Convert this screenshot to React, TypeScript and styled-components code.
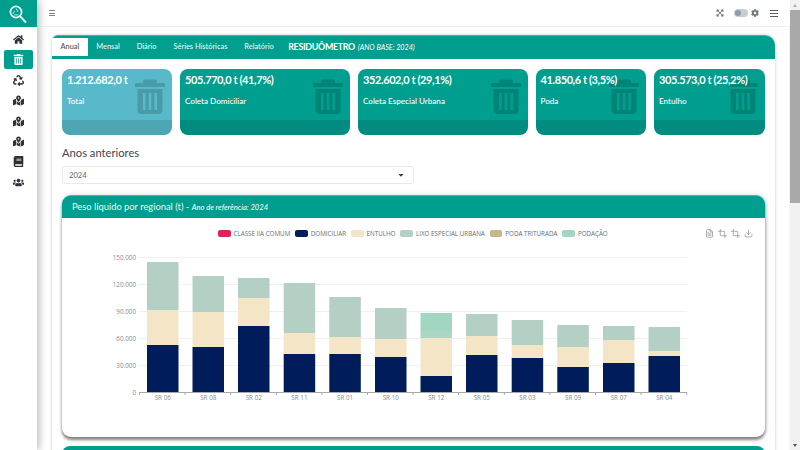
import React from "react";
import styled, { createGlobalStyle } from "styled-components";
import { FaHome, FaRecycle, FaBook, FaUsers, FaMapMarkedAlt, FaTrashAlt, FaExpandArrowsAlt, FaCog, FaCaretDown } from "react-icons/fa";
import { FiDownload, FiFileText, FiCrop } from "react-icons/fi";

const Global = createGlobalStyle`
  html, body { margin: 0; padding: 0; background: #fff; overflow: hidden; }
  body { font-family: Lato, "Open Sans", sans-serif; }
  * { box-sizing: border-box; }
`;

const Shell = styled.div`
  display: flex;
  width: 800px;
  height: 450px;
  overflow: hidden;
`;
const Sidebar = styled.aside`
  width: 37px;
  flex: none;
  background: #fff;
  box-shadow: 2px 0 8px rgba(0,0,0,.28);
  z-index: 2;
`;
const Logo = styled.div`
  height: 27px;
  background: #009e8e;
  display: flex;
  align-items: center;
  justify-content: center;
  padding-right: 1px;
`;
const NavList = styled.nav`
  display: flex;
  flex-direction: column;
  align-items: center;
  padding-top: 3px;
`;
const NavItem = styled.div<{ $active?: boolean }>`
  width: 29px;
  height: 19px;
  margin: 0 0 1.4px;
  border-radius: 2px;
  display: flex;
  align-items: center;
  justify-content: center;
  font-size: 11px;
  color: ${p => (p.$active ? "#fff" : "#2d3338")};
  background: ${p => (p.$active ? "#009e8e" : "transparent")};
`;
const Main = styled.main`
  flex: 1;
  min-width: 0;
  display: flex;
  flex-direction: column;
`;
const Header = styled.header`
  height: 27px;
  flex: none;
  display: flex;
  align-items: center;
  padding: 0 12px 0 12px;
  border-bottom: 1px solid #f1f2f3;
  color: #6c757d;
`;
const Spacer = styled.div`flex: 1;`;
const HeaderIcon = styled.span`
  display: flex;
  font-size: 8px;
  color: #6c757d;
`;
const Burger = styled.span<{ $bold?: boolean; $gap?: number }>`
  width: ${p => (p.$bold ? 8 : 6)}px;
  height: ${p => (p.$bold ? 7 : 6)}px;
  margin-left: ${p => p.$gap ?? 0}px;
  border-top: 1px solid ${p => (p.$bold ? "#555c62" : "#7d858b")};
  border-bottom: 1px solid ${p => (p.$bold ? "#555c62" : "#7d858b")};
  position: relative;
  &::after {
    content: "";
    position: absolute;
    left: 0; right: 0;
    top: calc(50% - .5px);
    height: 1px;
    background: ${p => (p.$bold ? "#555c62" : "#7d858b")};
  }
`;
const Toggle = styled.span`
  width: 14px;
  height: 8px;
  border-radius: 4px;
  background: #c5ced6;
  margin: 0 3px 0 10px;
  display: flex;
  align-items: center;
  &::before {
    content: "";
    width: 6px;
    height: 6px;
    margin-left: 1px;
    border-radius: 50%;
    background: #8f9aa3;
  }
`;
const Content = styled.div`
  flex: 1;
  min-height: 0;
  padding: 8px 0 0 15px;
  display: flex;
  border-right: 1px solid #f4f4f4;
  width: 753px;
`;
const Board = styled.section`
  width: 723px;
  background: #fff;
  border-radius: 8px 10px 0 0;
  box-shadow: 0 0 3px rgba(0,0,0,.25);
  display: flex;
  flex-direction: column;
  height: 430px;
`;
const TabBar = styled.div`
  height: 24px;
  background: #009e8e;
  border-radius: 6px 10px 0 0;
  display: flex;
  align-items: stretch;
  border-top: 1px solid #25c4b4;
  padding-top: 2px;
  padding-bottom: 3px;
`;
const Tab = styled.div<{ $active?: boolean }>`
  font-size: 7.4px;
  font-weight: 500;
  line-height: 18px;
  padding: 0 8.5px;
  color: ${p => (p.$active ? "#4b5258" : "#e4f6f3")};
  background: ${p => (p.$active ? "#fff" : "transparent")};
`;
const TabTitle = styled.div`
  margin-left: 6px;
  font-size: 8.9px;
  line-height: 18px;
  font-weight: 700;
  letter-spacing: -.3px;
  color: #fff;
  white-space: nowrap;
  em { font-size: 7.2px; font-weight: 400; letter-spacing: 0; margin-left: 1px; }
`;
const Body = styled.div`
  padding: 10px 10px 0;
  display: flex;
  flex-direction: column;
`;
const Kpis = styled.div`
  display: flex;
  gap: 8px;
`;
const Kpi = styled.div<{ $w: number; $info?: boolean }>`
  position: relative;
  overflow: hidden;
  width: ${p => p.$w}px;
  height: 66px;
  flex: none;
  border-radius: 8px;
  padding: 4px 5px;
  color: #fff;
  background: ${p => (p.$info ? "#57b9c9" : "#009e8e")};
  &::after {
    content: "";
    position: absolute;
    left: 0; right: 0; bottom: 0;
    height: 15px;
    background: rgba(0,0,0,.1);
  }
`;
const KpiValue = styled.div`
  position: relative;
  z-index: 1;
  font-size: 11px;
  line-height: 14px;
  font-weight: 700;
  letter-spacing: -.4px;
  white-space: nowrap;
`;
const KpiLabel = styled.div`
  position: relative;
  z-index: 1;
  margin-top: 8px;
  font-size: 8.1px;
  line-height: 12px;
  font-weight: 500;
  white-space: nowrap;
`;
const KpiIcon = styled.svg`
  position: absolute;
  right: 7px;
  top: 9px;
`;
const SectionTitle = styled.h3`
  margin: 10px 0 0;
  font-size: 11.2px;
  line-height: 15px;
  font-weight: 400;
  color: #3f474d;
`;
const Select = styled.div`
  margin-top: 6px;
  width: 352px;
  height: 18px;
  border: 1px solid #e6e8ea;
  border-radius: 3px;
  padding: 0 8px 0 6px;
  display: flex;
  align-items: center;
  justify-content: space-between;
  font-size: 7.6px;
  color: #5f666c;
  svg { font-size: 8px; color: #3c4247; }
`;
const ChartCard = styled.article`
  margin-top: 11px;
  height: 242px;
  border-radius: 9px;
  background: #fff;
  box-shadow: 0 3px 3px rgba(70,60,60,.6), 1px 0 5px rgba(0,0,0,.18);
  display: flex;
  flex-direction: column;
  flex: none;
`;
const NextCard = styled.div`
  margin-top: 9px;
  height: 20px;
  flex: none;
  border-radius: 8px 8px 0 0;
  background: #009e8e;
`;
const CardHead = styled.div`
  height: 23px;
  background: #009e8e;
  border-radius: 9px 9px 0 0;
  border-top: 1px solid #25c4b4;
  padding-left: 10px;
  font-size: 9.35px;
  line-height: 21px;
  color: #e8f8f5;
  white-space: nowrap;
  em { font-size: 7.6px; color: #fff; }
`;
const CardBody = styled.div`
  flex: 1;
  display: flex;
  flex-direction: column;
`;
const ChartTop = styled.div`
  display: flex;
  align-items: center;
  position: relative;
  height: 18px;
  margin-top: 6px;
  padding-left: 156px;
`;
const Legend = styled.div`
  display: flex;
  gap: 5px;
  align-items: center;
`;
const LegendItem = styled.div`
  display: flex;
  align-items: center;
  gap: 3px;
  font-family: "Open Sans", sans-serif;
  font-size: 6.25px;
  color: #666c71;
  white-space: nowrap;
`;
const Swatch = styled.span<{ $c: string }>`
  width: 12.5px;
  height: 7px;
  border-radius: 2px;
  background: ${p => p.$c};
`;
const Tools = styled.div`
  position: absolute;
  right: 12px;
  top: 5px;
  display: flex;
  gap: 4px;
  color: #8d9499;
  font-size: 9px;
`;
const PlotSvg = styled.svg`
  display: block;
  margin-top: 1px;
`;
const ScrollBar = styled.div`
  width: 10px;
  flex: none;
  background: #f1f1f1;
  display: flex;
  flex-direction: column;
  align-items: center;
`;
const ScrollArrow = styled.div<{ $up?: boolean }>`
  height: 10px;
  flex: none;
  display: flex;
  align-items: center;
  justify-content: center;
  &::before {
    content: "";
    border-left: 2.5px solid transparent;
    border-right: 2.5px solid transparent;
    ${p => (p.$up ? "border-bottom: 3px solid #b0b0b0;" : "border-top: 3px solid #505050;")}
  }
`;
const ScrollThumb = styled.div`
  width: 10px;
  height: 193px;
  flex: none;
  background: #a9a9a9;
`;
const ScrollRest = styled.div`flex: 1;`;

const COLORS = { dom: "#001c5a", ent: "#f3e5c5", lixo: "#b4cfc4", pod: "#a2d6c1" };
const bars = [
  { n: "SR 06", x: 147, a: 345, b: 310, c: 262 },
  { n: "SR 08", x: 192.5, a: 347, b: 312, c: 276 },
  { n: "SR 02", x: 238, a: 326, b: 298, c: 278 },
  { n: "SR 11", x: 283.7, a: 354, b: 333, c: 283 },
  { n: "SR 01", x: 329.3, a: 354, b: 337, c: 297 },
  { n: "SR 10", x: 375, a: 357, b: 339, c: 308 },
  { n: "SR 12", x: 420.5, a: 376, b: 338, c: 331, d: 313 },
  { n: "SR 05", x: 466, a: 355, b: 336, c: 314 },
  { n: "SR 03", x: 511.7, a: 358, b: 345, c: 320 },
  { n: "SR 09", x: 557.3, a: 367, b: 347, c: 325 },
  { n: "SR 07", x: 603, a: 363, b: 340, c: 326 },
  { n: "SR 04", x: 648.5, a: 356, b: 351, c: 327 },
];
const ticks = [
  { y: 392, t: "0" }, { y: 365, t: "30.000" }, { y: 338, t: "60.000" },
  { y: 311, t: "90.000" }, { y: 284, t: "120.000" }, { y: 257, t: "150.000" },
];
const OX = 62, OY = 243;
const BW = 31.5;

function Chart() {
  return (
    <PlotSvg width={703} height={194} viewBox={`${OX} ${OY} 703 194`}>
      {ticks.slice(1).map(t => (
        <line key={t.t} x1={139} x2={687} y1={t.y + .5} y2={t.y + .5} stroke="#eef0f2" strokeWidth={1} />
      ))}
      {ticks.map(t => (
        <text key={t.t} x={136} y={t.y + 2.5} textAnchor="end" fontSize={6.3} fill="#858b90" fontFamily="Open Sans, sans-serif">{t.t}</text>
      ))}
      {bars.map(b => (
        <g key={b.n}>
          <rect x={b.x} y={b.a} width={BW} height={392 - b.a} fill={COLORS.dom} />
          <rect x={b.x} y={b.b} width={BW} height={b.a - b.b} fill={COLORS.ent} />
          <rect x={b.x} y={b.c} width={BW} height={b.b - b.c} fill={b.d ? "#aad6c3" : COLORS.lixo} />
          {b.d ? <rect x={b.x} y={b.d} width={BW} height={b.c - b.d} fill={COLORS.pod} /> : null}
          <text x={b.x + BW / 2} y={400} textAnchor="middle" fontSize={6.3} fill="#858b90" fontFamily="Open Sans, sans-serif">{b.n}</text>
        </g>
      ))}
      <line x1={139} x2={687} y1={392.5} y2={392.5} stroke="#a3a9ad" strokeWidth={1} />
      {Array.from({ length: 13 }).map((_, i) => (
        <line key={i} x1={139.5 + i * 45.6} x2={139.5 + i * 45.6} y1={392} y2={395} stroke="#a3a9ad" strokeWidth={1} />
      ))}
    </PlotSvg>
  );
}

const LogoMark = () => (
  <svg width="18" height="18" viewBox="0 0 18 18" fill="none">
    <circle cx="7" cy="7" r="5.6" stroke="#eafaf7" strokeWidth="1.7" />
    <path d="M11.2 11.4l5.3 5.6" stroke="#eafaf7" strokeWidth="1.9" strokeLinecap="round" />
    <path d="M7.2 3.8l1.6 2.6M4 8.6l1.4-2.4M5.6 9.9h3.2" stroke="#8fe2d6" strokeWidth="1.1" strokeLinecap="round" />
  </svg>
);

const TrashBg = () => (
  <KpiIcon width="30" height="36" viewBox="0 0 30 36">
    <path fill="rgba(0,0,0,.16)" fillRule="evenodd"
      d="M10 1.5h10a2 2 0 0 1 2 2V5h7a1 1 0 0 1 1 1v2.5a.5.5 0 0 1-.5.5H.5A.5.5 0 0 1 0 8.5V6a1 1 0 0 1 1-1h7V3.5a2 2 0 0 1 2-2zM2.5 11h25v21a4 4 0 0 1-4 4h-17a4 4 0 0 1-4-4zM8 15v17h2.6V15zM13.7 15v17h2.6V15zM19.4 15v17H22V15z" />
  </KpiIcon>
);

const kpis = [
  { w: 110, v: "1.212.682,0 t", l: "Total", info: true },
  { w: 170, v: "505.770,0 t (41,7%)", l: "Coleta Domiciliar" },
  { w: 169.5, v: "352.602,0 t (29,1%)", l: "Coleta Especial Urbana" },
  { w: 110.5, v: "41.850,6 t (3,5%)", l: "Poda" },
  { w: 111, v: "305.573,0 t (25,2%)", l: "Entulho" },
];
const legend = [
  ["#dc2359", "CLASSE IIA COMUM"], ["#001c5a", "DOMICILIAR"], ["#f3e5c5", "ENTULHO"],
  ["#b4cfc4", "LIXO ESPECIAL URBANA"], ["#c9b78a", "PODA TRITURADA"], ["#a2d6c1", "PODAÇÃO"],
];

export default function App() {
  return (
    <Shell>
      <Global />
      <Sidebar>
        <Logo><LogoMark /></Logo>
        <NavList>
          <NavItem><FaHome /></NavItem>
          <NavItem $active><FaTrashAlt /></NavItem>
          <NavItem><FaRecycle /></NavItem>
          <NavItem><FaMapMarkedAlt /></NavItem>
          <NavItem><FaMapMarkedAlt /></NavItem>
          <NavItem><FaMapMarkedAlt /></NavItem>
          <NavItem><FaBook /></NavItem>
          <NavItem><FaUsers /></NavItem>
        </NavList>
      </Sidebar>
      <Main>
        <Header>
          <Burger />
          <Spacer />
          <HeaderIcon><FaExpandArrowsAlt /></HeaderIcon>
          <Toggle />
          <HeaderIcon><FaCog /></HeaderIcon>
          <Burger $bold $gap={11} />
        </Header>
        <Content>
          <Board>
            <TabBar>
              <Tab $active>Anual</Tab>
              <Tab>Mensal</Tab>
              <Tab>Diário</Tab>
              <Tab>Séries Históricas</Tab>
              <Tab>Relatório</Tab>
              <TabTitle>RESIDUÔMETRO <em><i>(ANO BASE: 2024)</i></em></TabTitle>
            </TabBar>
            <Body>
              <Kpis>
                {kpis.map(k => (
                  <Kpi key={k.l} $w={k.w} $info={k.info}>
                    <KpiValue>{k.v}</KpiValue>
                    <KpiLabel>{k.l}</KpiLabel>
                    <TrashBg />
                  </Kpi>
                ))}
              </Kpis>
              <SectionTitle>Anos anteriores</SectionTitle>
              <Select>2024<FaCaretDown /></Select>
              <ChartCard>
                <CardHead>Peso líquido por regional (t) - <em><i>Ano de referência: 2024</i></em></CardHead>
                <CardBody>
                  <ChartTop>
                    <Legend>
                      {legend.map(([c, t]) => (
                        <LegendItem key={t}><Swatch $c={c} />{t}</LegendItem>
                      ))}
                    </Legend>
                    <Tools>
                      <FiFileText /><FiCrop /><FiCrop /><FiDownload />
                    </Tools>
                  </ChartTop>
                  <Chart />
                </CardBody>
              </ChartCard>
              <NextCard />
            </Body>
          </Board>
        </Content>
      </Main>
      <ScrollBar>
        <ScrollArrow $up />
        <ScrollThumb />
        <ScrollRest />
        <ScrollArrow />
      </ScrollBar>
    </Shell>
  );
}
